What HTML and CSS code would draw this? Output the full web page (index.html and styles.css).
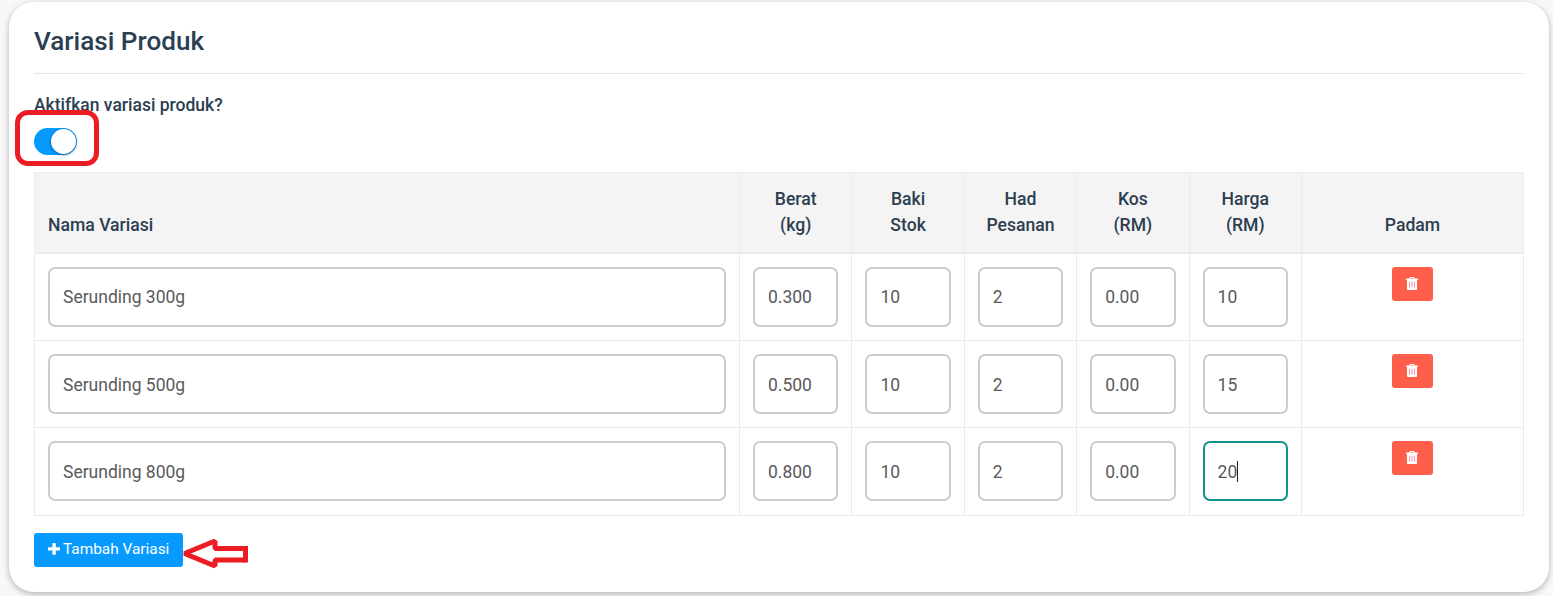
FILE: index.html
```html
<!DOCTYPE html>
<html lang="ms">
<head>
    <meta charset="UTF-8">
    <meta name="viewport" content="width=device-width, initial-scale=1.0">
    <title>Variasi Produk</title>
    <link rel="stylesheet" href="styles.css">
</head>
<body>

    <svg class="icon-defs" width="0" height="0">
        <symbol id="trash" viewBox="0 0 12 13">
            <path fill="#fff" d="M4 0h4l.8 1.6H12v1.2h-1V12a1 1 0 0 1-1 1H2a1 1 0 0 1-1-1V2.800H0V1.600h3.200zM4.600 1l-.3.600h3.400L7.400 1z"/>
            <path stroke="#ff7fa0" stroke-width=".9" d="M3.600 4.600v6M6 4.600v6M8.400 4.600v6"/>
        </symbol>
    </svg>

    <div class="card">
        <h2>Variasi Produk</h2>
        <label class="switch-label" for="variasi">Aktifkan variasi produk?</label>
        <div class="switch-row">
            <input type="checkbox" class="switch" id="variasi" checked>
            <span class="mark-box"></span>
        </div>

        <table>
            <colgroup>
                <col class="col-name">
                <col class="col-num" span="5">
                <col>
            </colgroup>
            <thead>
                <tr>
                    <th class="name">Nama Variasi</th>
                    <th>Berat<br>(kg)</th>
                    <th>Baki<br>Stok</th>
                    <th>Had<br>Pesanan</th>
                    <th>Kos<br>(RM)</th>
                    <th>Harga<br>(RM)</th>
                    <th>Padam</th>
                </tr>
            </thead>
            <tbody>
                <tr>
                    <td><input type="text" class="field" value="Serunding 300g"></td>
                    <td><input type="text" class="field" value="0.300"></td>
                    <td><input type="text" class="field" value="10"></td>
                    <td><input type="text" class="field" value="2"></td>
                    <td><input type="text" class="field" value="0.00"></td>
                    <td><input type="text" class="field" value="10"></td>
                    <td><button type="button" class="btn btn-danger"><svg width="12" height="13"><use href="#trash"/></svg></button></td>
                </tr>
                <tr>
                    <td><input type="text" class="field" value="Serunding 500g"></td>
                    <td><input type="text" class="field" value="0.500"></td>
                    <td><input type="text" class="field" value="10"></td>
                    <td><input type="text" class="field" value="2"></td>
                    <td><input type="text" class="field" value="0.00"></td>
                    <td><input type="text" class="field" value="15"></td>
                    <td><button type="button" class="btn btn-danger"><svg width="12" height="13"><use href="#trash"/></svg></button></td>
                </tr>
                <tr>
                    <td><input type="text" class="field" value="Serunding 800g"></td>
                    <td><input type="text" class="field" value="0.800"></td>
                    <td><input type="text" class="field" value="10"></td>
                    <td><input type="text" class="field" value="2"></td>
                    <td><input type="text" class="field" value="0.00"></td>
                    <td><div class="field active">20<span class="caret"></span></div></td>
                    <td><button type="button" class="btn btn-danger"><svg width="12" height="13"><use href="#trash"/></svg></button></td>
                </tr>
            </tbody>
        </table>

        <div class="actions">
            <button type="button" class="btn btn-primary"><svg width="12" height="12" viewBox="0 0 12 12"><path fill="#fff" d="M5 0h2.200q.6 0 .6.600v3.600h3.600q.6 0 .6.600v2.200q0 .6-.6.600H7.800v3.600q0 .6-.6.600H5q-.6 0-.6-.6V7.600H.6Q0 7.600 0 7V4.800q0-.6.600-.6h3.800V.6Q4.400 0 5 0z"/></svg>Tambah Variasi</button>
            <svg class="mark-arrow" width="68" height="34" viewBox="0 0 68 34"><path fill="none" stroke="#ed1c24" stroke-width="5" stroke-linejoin="bevel" d="M2.500 16.500L33 4v7.500H63.500v11.500H33v6z"/><path fill="#ed1c24" d="M61 9h5v16.500h-5z"/></svg>
        </div>
    </div>

</body>
</html>
```

FILE: styles.css
```css
* {
    box-sizing: border-box;
}
body {
    font-family: Roboto, sans-serif;
    font-size: 17.6px;
    color: #2c3e50;
    background-color: #f8f8f8;
    margin: 0;
    min-height: 100vh;
    padding: 2px 4px 0 9px;
}
.icon-defs {
    display: none;
}
.card {
    height: 590px;
    padding: 21px 25px 0;
    background: #fff;
    border-radius: 25px;
    box-shadow: 0 2px 6px rgba(0,0,0,0.28);
}
h2 {
    height: 51px;
    margin: 0 0 18px;
    border-bottom: 1px solid #e5e5e5;
    font-size: 26.1px;
    font-weight: 500;
    line-height: 36px;
}
.switch-label {
    display: block;
    font-size: 17.5px;
    font-weight: 500;
    line-height: 26px;
}
.switch-row {
    position: relative;
    height: 54px;
    padding-top: 10px;
}
.switch {
    appearance: none;
    display: block;
    width: 43px;
    height: 27px;
    margin: 0;
    border-radius: 14px;
    background: #069aff;
}
.switch::before {
    content: "";
    display: block;
    width: 25px;
    height: 25px;
    margin: 0 1px 0 17px;
    transform: translateY(1px);
    border-radius: 50%;
    background: #fff;
    box-shadow: 0 1px 3px rgba(0,0,0,0.4);
}
/* red highlight around the switch */
.mark-box {
    position: absolute;
    left: -19px;
    top: -8px;
    width: 84px;
    height: 56px;
    border: 5px solid #ed1c24;
    border-radius: 13px;
}
table {
    width: 1490px;
    table-layout: fixed;
    border-collapse: collapse;
}
.col-name {
    width: 705px;
}
.col-num {
    width: 112.4px;
}
th, td {
    border: 1px solid #ebebeb;
    padding: 13px;
    vertical-align: top;
    text-align: center;
}
th {
    height: 80px;
    padding-bottom: 14px;
    background: #f4f4f4;
    border-bottom-width: 2px;
    font-weight: 500;
    line-height: 26px;
    vertical-align: bottom;
}
th.name {
    text-align: left;
}
td {
    height: 87.4px;
}
.field {
    display: block;
    width: 100%;
    height: 60px;
    padding: 0 13px;
    border: 2px solid #ccc;
    border-radius: 7px;
    background: #fff;
    color: #5a5a5a;
    font: 400 17.5px/56px Roboto, sans-serif;
    text-align: left;
}
tr + tr .field {
    padding-top: 1px;
}
.active {
    display: flex;
    align-items: center;
    border-color: #12938a;
}
.caret {
    width: 1px;
    height: 21px;
    background: #222;
}
.btn {
    display: inline-flex;
    align-items: center;
    height: 34px;
    border: none;
    border-radius: 3px;
    color: #fff;
    font: 400 15.4px Roboto, sans-serif;
}
.btn-danger {
    width: 41px;
    padding: 0 1px 2px 0;
    justify-content: center;
    background: #ff5f4a;
}
.btn-primary {
    width: 149px;
    gap: 3px;
    padding: 0 0 2px 14px;
    background: #069aff;
    white-space: nowrap;
}
.actions {
    position: relative;
    display: flex;
    padding-top: 17px;
}
/* arrow pointing at the add button */
.mark-arrow {
    position: absolute;
    left: 148px;
    top: 21px;
}
```
